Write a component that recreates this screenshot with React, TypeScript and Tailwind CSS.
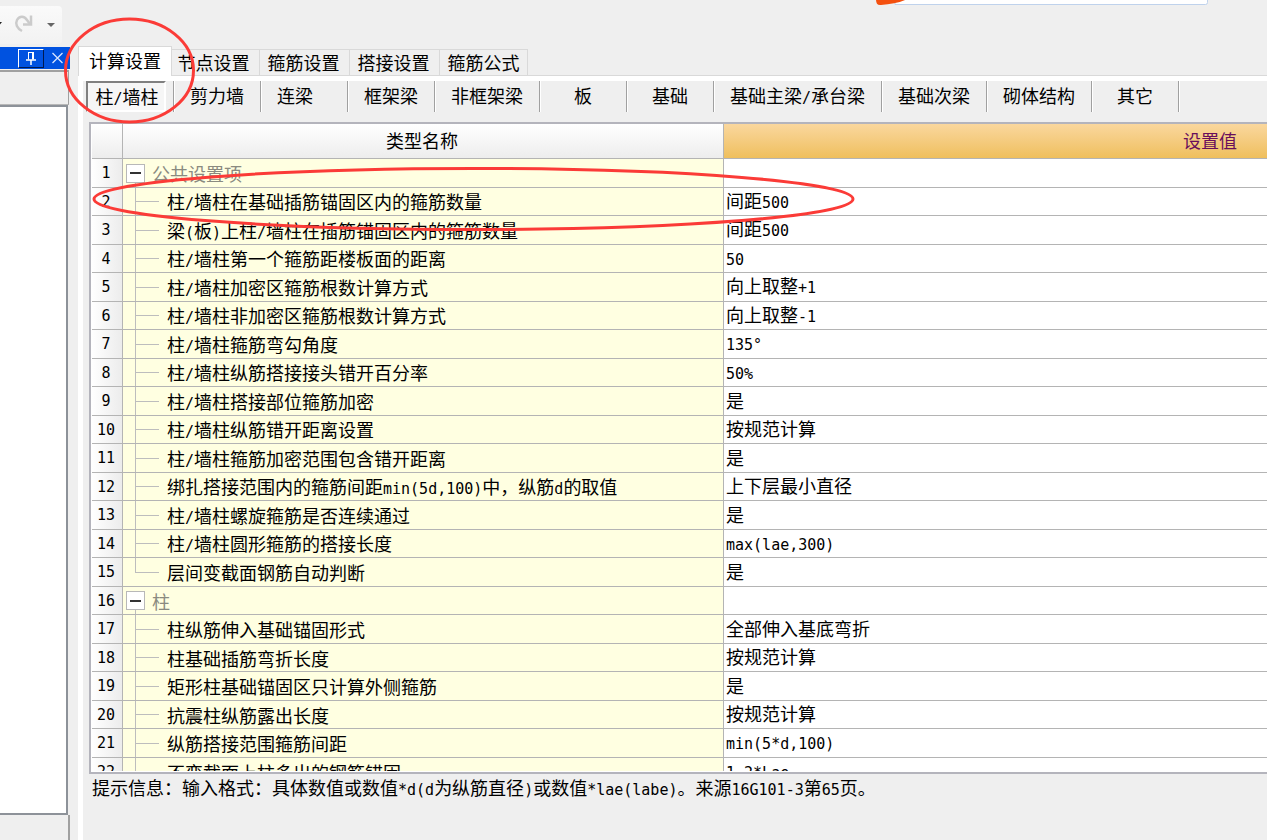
import React, { useState } from 'react';

interface SettingRow {
  name: string;
  value?: string;
  kind?: 'group' | 'last';
}

const tabs = ['计算设置', '节点设置', '箍筋设置', '搭接设置', '箍筋公式'];

const components = [
  { label: '剪力墙', width: 'w-[87px]' },
  { label: '连梁\u3000', width: 'w-[87px]' },
  { label: '框架梁', width: 'w-[87px]' },
  { label: '非框架梁', width: 'w-[105px]' },
  { label: '板', width: 'w-[87px]' },
  { label: '基础', width: 'w-[87px]' },
  { label: '基础主梁/承台梁', width: 'w-[168px]' },
  { label: '基础次梁', width: 'w-[105px]' },
  { label: '砌体结构', width: 'w-[105px]' },
  { label: '其它', width: 'w-[87px]' },
];

const rows: SettingRow[] = [
  { name: '公共设置项', kind: 'group' },
  { name: '柱/墙柱在基础插筋锚固区内的箍筋数量', value: '间距500' },
  { name: '梁(板)上柱/墙柱在插筋锚固区内的箍筋数量', value: '间距500' },
  { name: '柱/墙柱第一个箍筋距楼板面的距离', value: '50' },
  { name: '柱/墙柱加密区箍筋根数计算方式', value: '向上取整+1' },
  { name: '柱/墙柱非加密区箍筋根数计算方式', value: '向上取整-1' },
  { name: '柱/墙柱箍筋弯勾角度', value: '135°' },
  { name: '柱/墙柱纵筋搭接接头错开百分率', value: '50%' },
  { name: '柱/墙柱搭接部位箍筋加密', value: '是' },
  { name: '柱/墙柱纵筋错开距离设置', value: '按规范计算' },
  { name: '柱/墙柱箍筋加密范围包含错开距离', value: '是' },
  { name: '绑扎搭接范围内的箍筋间距min(5d,100)中，纵筋d的取值', value: '上下层最小直径' },
  { name: '柱/墙柱螺旋箍筋是否连续通过', value: '是' },
  { name: '柱/墙柱圆形箍筋的搭接长度', value: 'max(lae,300)' },
  { name: '层间变截面钢筋自动判断', value: '是', kind: 'last' },
  { name: '柱', kind: 'group' },
  { name: '柱纵筋伸入基础锚固形式', value: '全部伸入基底弯折' },
  { name: '柱基础插筋弯折长度', value: '按规范计算' },
  { name: '矩形柱基础锚固区只计算外侧箍筋', value: '是' },
  { name: '抗震柱纵筋露出长度', value: '按规范计算' },
  { name: '纵筋搭接范围箍筋间距', value: 'min(5*d,100)' },
  { name: '不变截面上柱多出的钢筋锚固', value: '1.2*Lae' },
];

// Half-width characters take half the width of a Chinese character
const Mixed: React.FC<{ text: string }> = ({ text }) => (
  <>
    {text.split(/([\x21-\x7e°]+)/).map((part, i) =>
      i % 2 === 1 ? (
        <span key={i} className="text-[15px]">{part}</span>
      ) : (
        part
      )
    )}
  </>
);

const TopBar = () => (
  <header className="flex h-[46px] shrink-0 items-start justify-between">
    <div className="mt-[6px] flex h-[38px] w-[62px] items-center rounded-r bg-gradient-to-b from-[#fafafa] to-[#f2f2f2]">
      <svg width="62" height="38" viewBox="0 0 62 38" aria-hidden="true">
        <path d="M-3 16h5l-2.500 3z" fill="#222" />
        <g fill="none" stroke="#cbcbcb" strokeWidth="2.500">
          <path d="M22 25c-5-2.500-7-7-5-11 2.500-4.500 7.500-4 10 0l3 4" />
          <path d="M31 9.500V18.500H23" />
        </g>
        <path d="M47 17h8l-4 4z" fill="#666" />
      </svg>
    </div>
    <svg className="mr-[58px]" width="334" height="8" viewBox="0 0 334 8" aria-hidden="true">
      <path d="M20-4H332.500V2.500q0 2-2 2H20z" fill="#fff" stroke="#bfd2ec" />
      <path d="M1-1c0 4 1 6.500 5 6 10-1 19-2 26-6z" fill="#f4500f" />
    </svg>
  </header>
);

const SidePanel = () => (
  <aside className="flex w-[78px] shrink-0 flex-col">
    <div className="mt-px flex h-[22px] w-[70px] items-center justify-end gap-2 bg-[#0052e0] pr-[7px]">
      <button
        aria-label="固定"
        className="flex h-[19px] w-[26px] items-center justify-center border border-t-white border-l-white border-r-[#001a50] border-b-[#001a50]"
      >
        <svg width="12" height="13" viewBox="0 0 12 13" fill="none" stroke="#fff">
          <path d="M3 .5H9M3.500.5V7.500M7.500.5V7.500M8.500.5V7.500" />
          <path d="M1 8H11M6 8V13" strokeWidth="1.500" />
        </svg>
      </button>
      <button aria-label="关闭">
        <svg width="11" height="12" viewBox="0 0 11 12" stroke="#d6e4ff" strokeWidth="1.300">
          <path d="M.5 1L10.500 11M10.500 1L.5 11" />
        </svg>
      </button>
    </div>
    <div className="mt-px h-[35px] w-[69px] border-t-2 border-r border-b border-t-[#a0a0a0] border-r-[#a0a0a0] border-b-[#b8b8b8]" />
    <div className="w-[68px] flex-1 border-t-2 border-r-2 border-b-2 border-[#8d9299] bg-white" />
    <div className="h-[25px] w-[70px] border-r-2 border-[#a0a0a0]" />
  </aside>
);

const Branch: React.FC<{ last: boolean }> = ({ last }) => (
  <div className="ml-3 flex h-full w-6 shrink-0 flex-col">
    <div className="flex-1 border-b border-l border-[#bdbdbd]" />
    <div className={`flex-1 ${last ? '' : 'border-l border-[#bdbdbd]'}`} />
  </div>
);

const NameCell: React.FC<{ row: SettingRow }> = ({ row }) => {
  if (row.kind === 'group') {
    return (
      <>
        <div className="ml-[3px] flex h-full w-[19px] shrink-0 flex-col items-center">
          <div className="flex-1" />
          <button
            aria-label={`折叠 ${row.name}`}
            className="flex h-[19px] w-[19px] items-center justify-center border border-[#b8b8b8] bg-white"
          >
            <span className="h-[2px] w-[11px] bg-[#333]" />
          </button>
          <div className="w-px flex-1 bg-[#bdbdbd]" />
        </div>
        <span className="ml-[7px] pt-1 text-[#8a8a80]">{row.name}</span>
      </>
    );
  }
  return (
    <>
      <Branch last={row.kind === 'last'} />
      <span className="pt-1 pl-2"><Mixed text={row.name} /></span>
    </>
  );
};

const SettingsTable = () => (
  <div className="ml-[6px] min-h-0 flex-1 border-2 border-r-0 border-[#b4b4bc] bg-white pb-px pl-px">
    <div className="h-full overflow-hidden">
      <table className="w-[1604px] table-fixed border-separate border-spacing-0">
        <colgroup>
          <col className="w-[31px]" />
          <col className="w-[601px]" />
          <col className="w-[972px]" />
        </colgroup>
        <thead>
          <tr className="h-[35px]">
            <th className="border-r border-b border-[#b4b4b4] bg-gradient-to-b from-white to-[#ededed] p-0" />
            <th className="border-r border-b border-[#b4b4b4] bg-gradient-to-b from-white to-[#ededed] p-0 pt-[2px] pr-[2px] font-normal">
              类型名称
            </th>
            <th className="border-b border-[#b4b4b4] bg-gradient-to-b from-[#fad79d] to-[#efbf5c] p-0 pt-[2px] font-normal text-[#680e5c]">
              设置值
            </th>
          </tr>
        </thead>
        <tbody>
          {rows.map((row, i) => (
            <tr key={i}>
              <td className="border-r border-b border-[#b4b4b4] bg-gradient-to-r from-white to-[#ececec] p-0 pr-[2px] text-center text-[15px]">
                {i + 1}
              </td>
              <td className="border-r border-b border-[#b4b4b4] bg-[#ffffe1] p-0">
                <div className={`flex items-center whitespace-nowrap ${i % 2 === 0 ? 'h-[28px]' : 'h-[27px]'}`}>
                  <NameCell row={row} />
                </div>
              </td>
              <td className="border-b border-[#b4b4b4] p-0 pt-px pl-[2px] whitespace-nowrap">
                <Mixed text={row.value || ''} />
              </td>
            </tr>
          ))}
        </tbody>
      </table>
    </div>
  </div>
);

const Annotations = () => (
  <svg
    className="pointer-events-none absolute top-0 left-0"
    width="900"
    height="260"
    viewBox="0 0 900 260"
    fill="none"
    stroke="#fb3b37"
    strokeWidth="3"
    aria-hidden="true"
  >
    <ellipse cx="129.500" cy="70.500" rx="64" ry="51.500" />
    <ellipse cx="473.500" cy="199" rx="379.500" ry="30.500" />
  </svg>
);

export default function App() {
  const [tab, setTab] = useState('计算设置');

  return (
    <div className="relative flex h-screen flex-col overflow-hidden bg-[#efefef] font-['DejaVu_Sans_Mono','Noto_Sans_CJK_SC',monospace] text-[18px] leading-[24px] text-black">
      <TopBar />
      <div className="flex min-h-0 flex-1">
        <SidePanel />
        <main className="flex min-w-0 flex-1 flex-col">
          <nav className="flex h-[30px] shrink-0 items-end border-b border-[#d9d9d9]">
            {tabs.map((t) => (
              <button
                key={t}
                onClick={() => setTab(t)}
                className={
                  t === tab
                    ? 'z-10 mr-[-2px] mb-[-1px] h-[30px] w-[94px] border-t border-r border-l border-[#d9d9d9] bg-white'
                    : 'h-[26px] w-[90px] border-t border-r border-[#d9d9d9] pt-[2px] pr-[2px] last:w-[88px] last:pr-0'
                }
              >
                {t}
              </button>
            ))}
          </nav>
          <div className="flex min-h-0 flex-1 flex-col border-t-[5px] border-l-[5px] border-white">
            <div className="flex h-[41px] shrink-0 items-start">
              <div className="flex h-[31px] w-[91px] shrink-0 border-r border-[#a0a0a0] pl-[3px] shadow-[1px_0_0_#fff]">
                <button className="h-[31px] w-[80px] border-2 border-t-[#808080] border-r-white border-b-white border-l-[#808080] bg-[#f6f6f6] pt-[3px] pl-[2px]">
                  <Mixed text="柱/墙柱" />
                </button>
              </div>
              {components.map((c) => (
                <button
                  key={c.label}
                  className={`h-[31px] shrink-0 border-r border-[#a0a0a0] pt-px whitespace-pre shadow-[1px_0_0_#fff] ${c.width}`}
                >
                  <Mixed text={c.label} />
                </button>
              ))}
            </div>
            <SettingsTable />
            <p className="h-[66px] shrink-0 pt-[3px] pl-[9px] whitespace-nowrap">
              <Mixed text="提示信息：输入格式：具体数值或数值*d(d为纵筋直径)或数值*lae(labe)。来源16G101-3第65页。" />
            </p>
          </div>
        </main>
      </div>
      <Annotations />
    </div>
  );
}
